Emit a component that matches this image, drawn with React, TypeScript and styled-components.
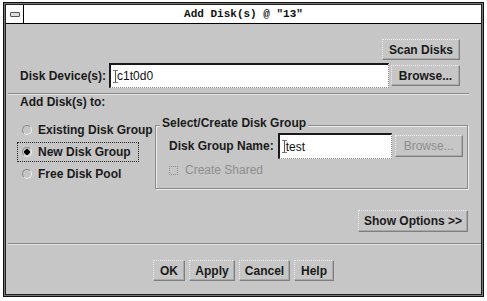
import React from 'react';
import styled, { createGlobalStyle } from 'styled-components';

const GlobalStyle = createGlobalStyle`
  html, body {
    margin: 0;
    padding: 0;
    background: #ffffff;
  }
  body {
    font-family: "Liberation Sans", Arial, sans-serif;
  }
`;

const Page = styled.div`
  padding: 2px 3px 4px 3px;
`;

const Window = styled.div`
  width: 481px;
  height: 295px;
  box-sizing: border-box;
  border: 1px solid #111;
  box-shadow: inset 0 0 0 1px #777, inset 0 0 0 2px #222;
  padding: 2px;
  display: flex;
  flex-direction: column;
  background: #ffffff;
`;

const TitleBar = styled.div`
  height: 18px;
  display: flex;
  align-items: stretch;
  background: #ffffff;
  border-bottom: 1px solid #000;
`;

const MenuBox = styled.div`
  width: 17px;
  border-right: 1px solid #000;
  display: flex;
  align-items: center;
  justify-content: center;
`;

const MenuGlyph = styled.div`
  width: 8px;
  height: 3px;
  border: 1px solid #555;
  border-radius: 1px;
  background: #ddd;
`;

const Title = styled.div`
  flex: 1;
  text-align: center;
  font-family: "Liberation Mono", "Courier New", monospace;
  font-weight: bold;
  font-size: 11px;
  line-height: 18px;
  color: #111;
  padding-right: 18px;
`;

const Body = styled.div`
  flex: 1;
  background: #c6c6c6;
  display: flex;
  flex-direction: column;
  padding-top: 15px;
`;

const Row = styled.div<{ $justify?: string; $pl?: number; $pr?: number; $mt?: number }>`
  display: flex;
  align-items: center;
  justify-content: ${p => p.$justify || 'flex-start'};
  padding-left: ${p => p.$pl ?? 0}px;
  padding-right: ${p => p.$pr ?? 0}px;
  margin-top: ${p => p.$mt ?? 0}px;
`;

const Label = styled.span<{ $disabled?: boolean }>`
  font-size: 12px;
  font-weight: bold;
  line-height: 14px;
  color: ${p => (p.$disabled ? '#8e8e8e' : '#1a1a1a')};
  white-space: nowrap;
`;

const Button = styled.div<{ $w?: number; $h?: number; $disabled?: boolean }>`
  box-sizing: border-box;
  width: ${p => (p.$w ? `${p.$w}px` : 'auto')};
  height: ${p => p.$h ?? 21}px;
  padding: 0 7px;
  display: flex;
  align-items: center;
  justify-content: center;
  font-size: 12px;
  font-weight: bold;
  color: ${p => (p.$disabled ? '#8e8e8e' : '#1a1a1a')};
  background: #c6c6c6;
  border-top: 1px dotted #eeeeee;
  border-left: 1px dotted #eeeeee;
  border-right: 1px solid #7e7e7e;
  border-bottom: 1px solid #7e7e7e;
  box-shadow: inset -1px -1px 0 #a9a9a9;
  white-space: nowrap;
`;

const Field = styled.div<{ $w?: number; $h: number; $ml: number }>`
  box-sizing: border-box;
  ${p => (p.$w ? `width: ${p.$w}px;` : 'flex: 1;')}
  height: ${p => p.$h}px;
  margin-left: ${p => p.$ml}px;
  background: #ffffff;
  border-top: 2px solid #1a1a1a;
  border-left: 2px solid #1a1a1a;
  border-right: 1px dotted #888;
  border-bottom: 1px dotted #888;
  display: flex;
  align-items: center;
  padding-left: 2px;
  font-size: 12px;
  color: #111;
`;

const Caret = styled.span`
  position: relative;
  width: 5px;
  height: 13px;
  box-sizing: border-box;
  border-top: 1px solid #777;
  border-bottom: 1px solid #777;
  margin-right: -1px;
  flex: none;
  &::after {
    content: '';
    position: absolute;
    left: 2px;
    top: 0;
    bottom: 0;
    width: 1px;
    background: #555;
  }
`;

const Separator = styled.div<{ $mt: number; $ml: number; $mr: number }>`
  margin: ${p => p.$mt}px ${p => p.$mr}px 0 ${p => p.$ml}px;
  border-top: 1px solid #8a8a8a;
  border-bottom: 1px solid #e4e4e4;
`;

const Section = styled.div`
  display: flex;
  align-items: flex-start;
  padding-left: 11px;
`;

const RadioColumn = styled.div`
  width: 138px;
  margin-top: 11px;
  display: flex;
  flex-direction: column;
  align-items: flex-start;
  gap: 2px;
`;

const RadioItem = styled.div<{ $focused?: boolean }>`
  box-sizing: border-box;
  height: 20px;
  display: flex;
  align-items: center;
  gap: 6px;
  padding: 0 7px 0 4px;
  border: 1px dotted ${p => (p.$focused ? '#222' : 'transparent')};
`;

const RadioDot = styled.span<{ $on?: boolean }>`
  box-sizing: border-box;
  width: 10px;
  height: 10px;
  border-radius: 50%;
  border: 1px solid;
  border-color: #8a8a8a #eeeeee #eeeeee #8a8a8a;
  background: ${p => (p.$on ? 'radial-gradient(circle, #000 0 2.6px, #c6c6c6 3px)' : '#c6c6c6')};
`;

const GroupBox = styled.div`
  position: relative;
  box-sizing: border-box;
  width: 313px;
  height: 64px;
  margin-top: 16px;
  border: 1px solid #8a8a8a;
  box-shadow: 1px 1px 0 #ececec, inset 1px 1px 0 #ececec;
  padding: 7px 0 0 13px;
`;

const GroupTitle = styled.span`
  position: absolute;
  top: -10px;
  left: 4px;
  padding: 0 2px;
  background: #c6c6c6;
  font-size: 12px;
  font-weight: bold;
  line-height: 14px;
  color: #1a1a1a;
`;

const CheckBox = styled.span`
  width: 9px;
  height: 9px;
  box-sizing: border-box;
  border: 1px dotted #8e8e8e;
  margin-right: 7px;
`;

const ActionRow = styled.div`
  display: flex;
  justify-content: center;
  gap: 4px;
  margin-top: 15px;
`;

export default function App() {
  return (
    <>
      <GlobalStyle />
      <Page>
        <Window>
          <TitleBar>
            <MenuBox>
              <MenuGlyph />
            </MenuBox>
            <Title>Add Disk(s) @ "13"</Title>
          </TitleBar>
          <Body>
            <Row $justify="flex-end" $pr={21}>
              <Button $w={78}>Scan Disks</Button>
            </Row>
            <Row $pl={14} $pr={21} $mt={3}>
              <Label>Disk Device(s):</Label>
              <Field $h={25} $ml={3}>
                <Caret />
                c1t0d0
              </Field>
              <Button $w={69} style={{ marginLeft: 2 }}>Browse...</Button>
            </Row>
            <Separator $mt={5} $ml={2} $mr={12} />
            <Row $pl={14}>
              <Label>Add Disk(s) to:</Label>
            </Row>
            <Section>
              <RadioColumn>
                <RadioItem>
                  <RadioDot />
                  <Label>Existing Disk Group</Label>
                </RadioItem>
                <RadioItem $focused>
                  <RadioDot $on />
                  <Label>New Disk Group</Label>
                </RadioItem>
                <RadioItem>
                  <RadioDot />
                  <Label>Free Disk Pool</Label>
                </RadioItem>
              </RadioColumn>
              <GroupBox>
                <GroupTitle>Select/Create Disk Group</GroupTitle>
                <Row>
                  <Label>Disk Group Name:</Label>
                  <Field $w={114} $h={26} $ml={4}>
                    <Caret />
                    test
                  </Field>
                  <Button $w={68} $h={22} $disabled style={{ marginLeft: 3, fontWeight: 'normal' }}>
                    Browse...
                  </Button>
                </Row>
                <Row $mt={4}>
                  <CheckBox />
                  <Label $disabled style={{ fontWeight: 'normal' }}>Create Shared</Label>
                </Row>
              </GroupBox>
            </Section>
            <Row $justify="flex-end" $pr={13} $mt={21}>
              <Button $w={110} $h={22}>Show Options &gt;&gt;</Button>
            </Row>
            <Separator $mt={11} $ml={2} $mr={0} />
            <ActionRow>
              <Button $w={32}>OK</Button>
              <Button $w={46}>Apply</Button>
              <Button $w={51}>Cancel</Button>
              <Button $w={40}>Help</Button>
            </ActionRow>
          </Body>
        </Window>
      </Page>
    </>
  );
}
